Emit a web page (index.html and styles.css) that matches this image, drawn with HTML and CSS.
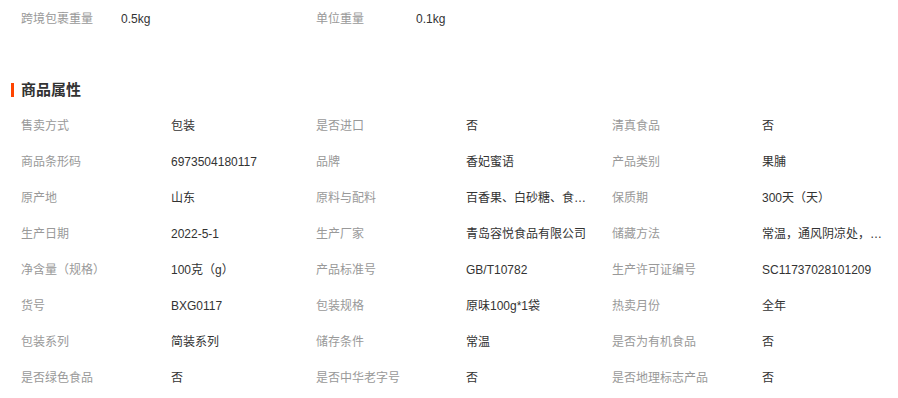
FILE: index.html
```html
<!DOCTYPE html>
<html lang="zh-CN">
<head>
<meta charset="utf-8">
<link rel="stylesheet" href="styles.css">
</head>
<body>
<div class="page">
  <div class="weights">
    <span class="lbl">跨境包裹重量</span><span class="val">0.5kg</span>
    <span class="lbl">单位重量</span><span class="val">0.1kg</span>
  </div>
  <h2 class="title">商品属性</h2>
  <div class="attrs">
    <span class="lbl">售卖方式</span><span class="val">包装</span>
    <span class="lbl">是否进口</span><span class="val">否</span>
    <span class="lbl">清真食品</span><span class="val">否</span>

    <span class="lbl">商品条形码</span><span class="val">6973504180117</span>
    <span class="lbl">品牌</span><span class="val">香妃蜜语</span>
    <span class="lbl">产品类别</span><span class="val">果脯</span>

    <span class="lbl">原产地</span><span class="val">山东</span>
    <span class="lbl">原料与配料</span><span class="val">百香果、白砂糖、食品添加剂</span>
    <span class="lbl">保质期</span><span class="val">300天（天）</span>

    <span class="lbl">生产日期</span><span class="val">2022-5-1</span>
    <span class="lbl">生产厂家</span><span class="val">青岛容悦食品有限公司</span>
    <span class="lbl">储藏方法</span><span class="val">常温，通风阴凉处，避免阳光直射</span>

    <span class="lbl">净含量（规格）</span><span class="val">100克（g）</span>
    <span class="lbl">产品标准号</span><span class="val">GB/T10782</span>
    <span class="lbl">生产许可证编号</span><span class="val">SC11737028101209</span>

    <span class="lbl">货号</span><span class="val">BXG0117</span>
    <span class="lbl">包装规格</span><span class="val">原味100g*1袋</span>
    <span class="lbl">热卖月份</span><span class="val">全年</span>

    <span class="lbl">包装系列</span><span class="val">简装系列</span>
    <span class="lbl">储存条件</span><span class="val">常温</span>
    <span class="lbl">是否为有机食品</span><span class="val">否</span>

    <span class="lbl">是否绿色食品</span><span class="val">否</span>
    <span class="lbl">是否中华老字号</span><span class="val">否</span>
    <span class="lbl">是否地理标志产品</span><span class="val">否</span>
  </div>
</div>
</body>
</html>
```
FILE: styles.css
```css
* { box-sizing: border-box; }
html, body { margin: 0; padding: 0; background: #fff; }
body {
  font-family: "Liberation Sans", "Noto Sans CJK SC", sans-serif;
  font-size: 12px;
  color: #333;
}
.page { width: 898px; padding-top: 1px; }
.weights {
  display: grid;
  grid-template-columns: 100px 195px 100px 1fr;
  padding-left: 21px;
  height: 36px;
  line-height: 36px;
}
.lbl { color: #999; white-space: nowrap; }
.val {
  color: #333;
  white-space: nowrap;
  overflow: hidden;
  text-overflow: ellipsis;
  max-width: 124px;
}
.title {
  margin: 46px 0 0 11px;
  padding-left: 7px;
  border-left: 3px solid #ff4400;
  font-size: 15px;
  font-weight: bold;
  line-height: 14px;
  height: 14px;
  color: #333;
}
.attrs {
  margin-top: 11px;
  display: grid;
  grid-template-columns: 150px 145px 150px 146px 150px 1fr;
  grid-auto-rows: 36px;
  padding-left: 21px;
  line-height: 36px;
}
```
